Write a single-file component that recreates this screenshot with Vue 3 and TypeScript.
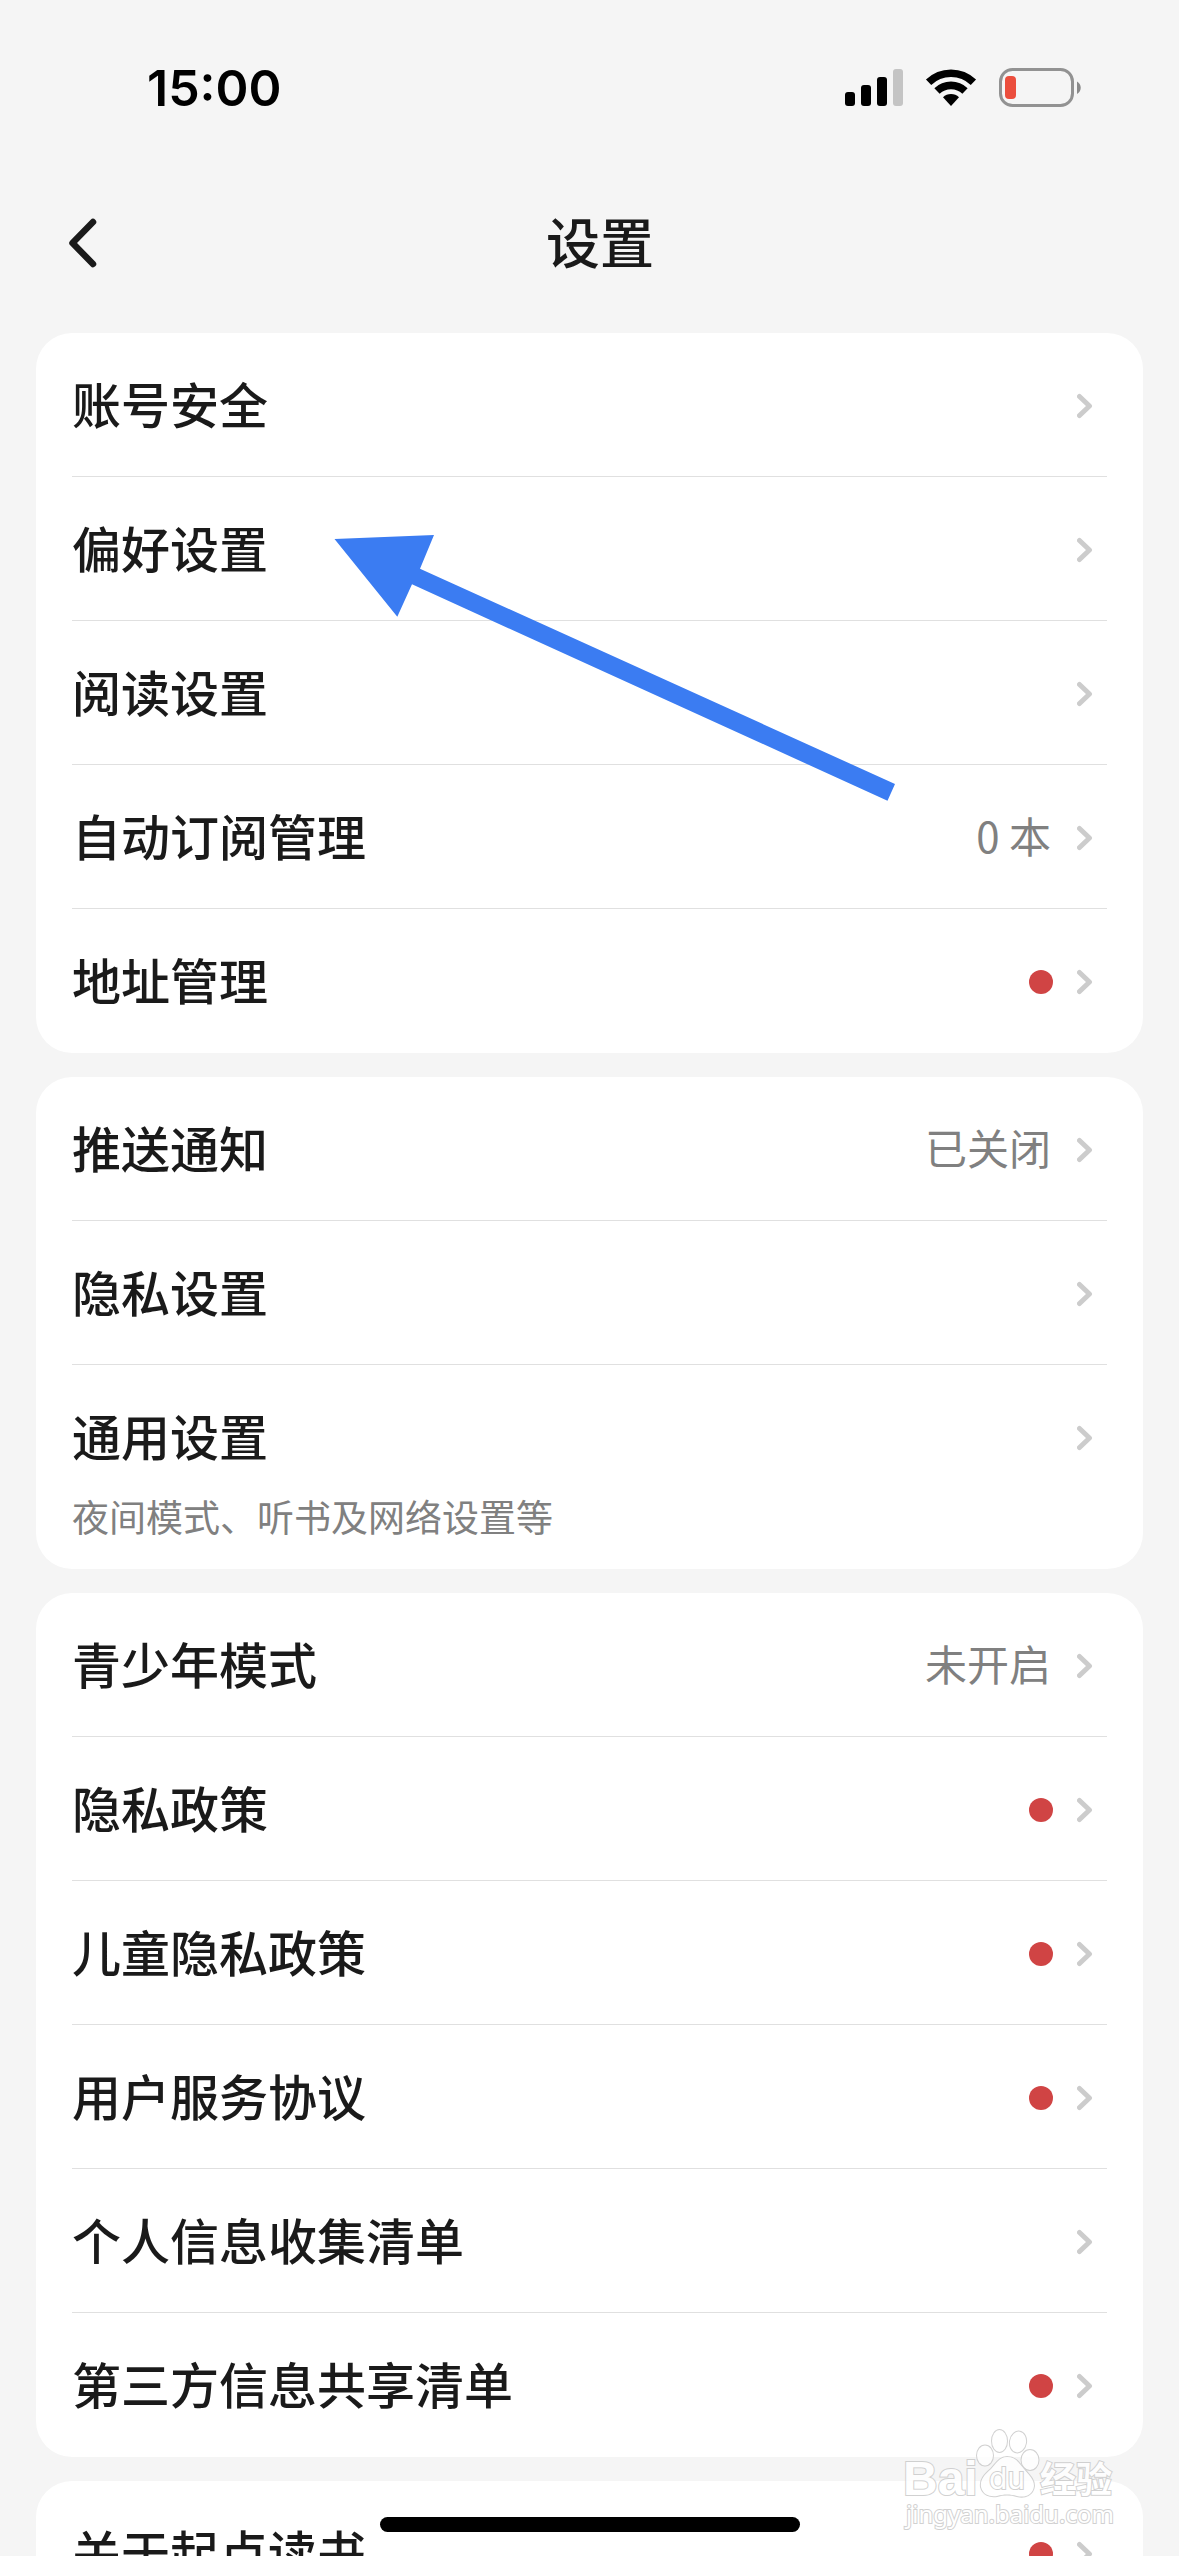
<script setup lang="ts">
interface SettingItem {
  label: string
  value?: string
  note?: string
  dot?: boolean
}

const groups: SettingItem[][] = [
  [
    { label: '账号安全' },
    { label: '偏好设置' },
    { label: '阅读设置' },
    { label: '自动订阅管理', value: '0 本' },
    { label: '地址管理', dot: true },
  ],
  [
    { label: '推送通知', value: '已关闭' },
    { label: '隐私设置' },
    { label: '通用设置', note: '夜间模式、听书及网络设置等' },
  ],
  [
    { label: '青少年模式', value: '未开启' },
    { label: '隐私政策', dot: true },
    { label: '儿童隐私政策', dot: true },
    { label: '用户服务协议', dot: true },
    { label: '个人信息收集清单' },
    { label: '第三方信息共享清单', dot: true },
  ],
  [{ label: '关于起点读书', dot: true }],
]
</script>

<template>
  <div class="screen">
    <div class="status">
      <time class="clock">15:00</time>
      <div class="status-icons">
        <svg width="58" height="38" viewBox="0 0 58 38" aria-hidden="true">
          <rect x="0" y="23" width="10" height="14" rx="3" />
          <rect x="16" y="16" width="10" height="21" rx="3" />
          <rect x="32" y="8" width="10" height="29" rx="3" />
          <rect x="48" y="0" width="10" height="37" rx="3" fill="#c4c4c4" />
        </svg>
        <svg width="52" height="38" viewBox="0 0 52 38" aria-hidden="true">
          <g fill="none" stroke="#000" stroke-width="7.6">
            <path d="M3.6 13.3A32.3 32.3 0 0 1 48.4 13.3" />
            <path d="M12 22A20.2 20.2 0 0 1 40 22" />
          </g>
          <path d="M26 37L18 28.2A11.5 11.5 0 0 1 34 28.2Z" />
        </svg>
        <svg width="83" height="40" viewBox="0 0 83 40" aria-hidden="true">
          <rect x="1.5" y="1.5" width="72" height="36" rx="12" fill="none" stroke="#929292" stroke-width="3" />
          <rect x="6" y="8" width="11" height="23" rx="4" fill="#eb4e3d" />
          <path d="M78 13.5C83 16 83 23.5 78 26Z" fill="#8a8a8a" />
        </svg>
      </div>
    </div>

    <header class="nav">
      <button class="back" type="button" aria-label="返回">
        <svg width="54" height="54" viewBox="0 0 54 54" aria-hidden="true">
          <path d="M36 6L15.5 27L36 48" fill="none" stroke="#1a1a1a" stroke-width="6.5" stroke-linecap="round" stroke-linejoin="round" />
        </svg>
      </button>
      <h1 class="title">设置</h1>
    </header>

    <main class="groups">
      <ul v-for="(group, g) in groups" :key="g" class="card">
        <li v-for="item in group" :key="item.label" class="item">
          <a class="link" href="#">
            <span class="row">
              <span class="label">{{ item.label }}</span>
              <span v-if="item.value" class="value">{{ item.value }}</span>
              <span v-if="item.dot" class="dot"></span>
              <svg class="chevron" width="30" height="30" viewBox="0 0 30 30" aria-hidden="true">
                <path d="M2.5 5.5L12.5 15L2.5 24.5" fill="none" stroke="#ccc" stroke-width="5" stroke-linecap="round" stroke-linejoin="round" />
              </svg>
            </span>
            <span v-if="item.note" class="note">{{ item.note }}</span>
          </a>
        </li>
      </ul>
    </main>

    <svg class="arrow" width="562" height="268" viewBox="0 0 562 268" aria-hidden="true">
      <path d="M0.5 5L100 1L86 34.7L561 250L553.5 266.7L78 50.3L63.3 82.7Z" fill="#3b7cf2" />
    </svg>

    <svg class="watermark" width="220" height="112" viewBox="0 0 220 112" role="img" aria-label="Baidu 经验">
      <g class="mark">
        <text class="latin" x="3" y="67">Bai</text>
        <ellipse cx="85" cy="27.500" rx="8" ry="10" />
        <ellipse cx="99.500" cy="13" rx="7.500" ry="11" />
        <ellipse cx="118" cy="14" rx="8" ry="10.500" transform="rotate(10 118 14)" />
        <ellipse cx="130" cy="32" rx="8.500" ry="10" />
        <path d="M107 29C99 29 96 36 91 41C84 47 80 52 81 59C83 67 90 69 97 68C104 66 110 66 117 68C125 70 133 67 134 58C134 51 129 47 124 41C119 35 116 29 107 29Z" />
        <text class="du" x="89" y="61">du</text>
        <text class="cjk" x="140" y="65">经验</text>
        <text class="site" x="6" y="95">jingyan.baidu.com</text>
      </g>
    </svg>

    <div class="home-bar"></div>
  </div>
</template>

<style>
body {
  margin: 0;
  background: #f5f5f5;
}
</style>

<style scoped>
.screen {
  position: relative;
  display: flex;
  flex-direction: column;
  height: 100vh;
  overflow: hidden;
  background: #f5f5f5;
  color: #1a1a1a;
  font-family: Inter, "Noto Sans CJK SC", sans-serif;
}

.status {
  flex: none;
  display: flex;
  align-items: center;
  justify-content: space-between;
  box-sizing: border-box;
  height: 177px;
  padding: 0 97px 2px 147px;
}

.clock {
  color: #000;
  font-size: 50px;
  font-weight: 600;
  line-height: 60px;
}

.status-icons {
  display: flex;
  align-items: center;
  gap: 22px;
}

.nav {
  flex: none;
  display: grid;
  grid-template-columns: 1fr auto 1fr;
  align-items: center;
  height: 132px;
  padding: 0 36px 0 57px;
}

.back {
  justify-self: start;
  padding: 0;
  border: 0;
  background: none;
}

.back svg {
  display: block;
}

.title {
  margin: 0;
  padding-bottom: 4px;
  font-family: "Noto Sans CJK SC", sans-serif;
  font-size: 54px;
  font-weight: 500;
  line-height: 72px;
}

.groups {
  flex: 1;
  min-height: 0;
  display: flex;
  flex-direction: column;
  gap: 24px;
  padding: 24px 36px 0;
  overflow: hidden;
}

.card {
  flex: none;
  margin: 0;
  padding: 0 36px;
  border-radius: 36px;
  background: #fff;
  list-style: none;
}

.link {
  display: block;
  color: inherit;
  text-decoration: none;
}

.row {
  display: flex;
  align-items: center;
  gap: 24px;
  box-sizing: border-box;
  height: 144px;
  padding-top: 2px;
  border-bottom: 1px solid #e0e0e0;
}

.item:last-child .row {
  border-bottom-color: transparent;
}

.label {
  flex: 1;
  padding-bottom: 6px;
  font-family: "Noto Sans CJK SC", sans-serif;
  font-size: 49px;
  font-weight: 500;
  line-height: 72px;
}

.value {
  padding: 0 2px 6px 0;
  color: #808080;
  font-family: "Noto Sans CJK SC", sans-serif;
  font-size: 42px;
  line-height: 60px;
}

.dot {
  width: 24px;
  height: 24px;
  border-radius: 50%;
  background: #d04444;
}

.note {
  display: block;
  padding-bottom: 26px;
  margin-top: -20px;
  color: #808080;
  font-family: "Noto Sans CJK SC", sans-serif;
  font-size: 37px;
  line-height: 54px;
}

.arrow {
  position: absolute;
  top: 534px;
  left: 334px;
}

.watermark {
  position: absolute;
  right: 59px;
  bottom: 16px;
}

.mark {
  fill: #fff;
  stroke: #cacaca;
  stroke-width: 2px;
  paint-order: stroke;
  opacity: 0.85;
}

.latin {
  font: 700 48px "Liberation Sans", sans-serif;
}

.du {
  font: 400 30px Inter, sans-serif;
}

.cjk {
  font: 700 36px "Noto Sans CJK SC", sans-serif;
}

.site {
  font: 400 24px "Noto Sans", sans-serif;
}

.home-bar {
  position: absolute;
  bottom: 24px;
  left: 50%;
  width: 420px;
  height: 15px;
  border-radius: 8px;
  background: #000;
  transform: translateX(-50%);
}
</style>
